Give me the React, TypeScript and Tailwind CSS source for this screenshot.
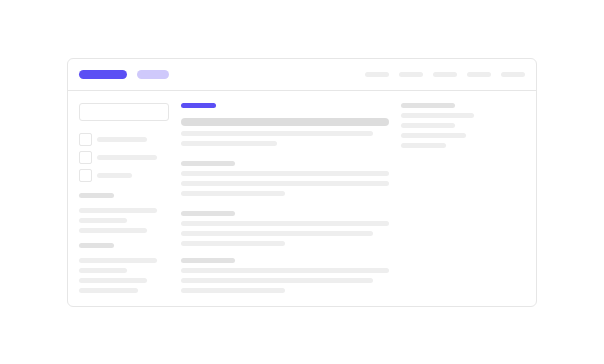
import React from "react";

const Bar = ({ w, h = "h-[5px]", c = "bg-[#eeeeee]", cls = "" }: { w: string; h?: string; c?: string; cls?: string }) => (
  <div className={`${w} ${h} ${c} rounded-full ${cls}`} />
);

export default function App() {
  return (
    <div className="w-[604px] h-[364px] bg-white pt-[58px] pl-[67px]">
      <div className="w-[470px] h-[249px] border border-[#e6e6e6] rounded-[6px] bg-white flex flex-col">
        <div className="h-[32px] border-b border-[#e6e6e6] flex items-center justify-between px-[11px]">
          <div className="flex gap-[10px]">
            <div className="w-[48px] h-[9px] rounded-full bg-[#5b4ff4]" />
            <div className="w-[32px] h-[9px] rounded-full bg-[#cfc9fb]" />
          </div>
          <div className="flex gap-[10px]">
            {[0, 1, 2, 3, 4].map((i) => (
              <div key={i} className="w-[24px] h-[5px] rounded-full bg-[#eeeeee]" />
            ))}
          </div>
        </div>
        <div className="flex gap-[12px] px-[11px] pt-[12px]">
          {/* sidebar */}
          <div className="w-[90px] flex flex-col">
            <div className="w-[90px] h-[18px] border border-[#e6e6e6] rounded-[3px]" />
            <div className="mt-[12px] flex flex-col gap-[5px]">
              {["w-[50px]", "w-[60px]", "w-[35px]"].map((w, i) => (
                <div key={i} className="flex items-center gap-[5px] h-[13px]">
                  <div className="w-[13px] h-[13px] border border-[#e6e6e6] rounded-[2px]" />
                  <Bar w={w} />
                </div>
              ))}
            </div>
            <Bar w="w-[35px]" c="bg-[#e2e2e2]" cls="mt-[11px]" />
            <div className="mt-[10px] flex flex-col gap-[5px]">
              <Bar w="w-[78px]" />
              <Bar w="w-[48px]" />
              <Bar w="w-[68px]" />
            </div>
            <Bar w="w-[35px]" c="bg-[#e2e2e2]" cls="mt-[10px]" />
            <div className="mt-[10px] flex flex-col gap-[5px]">
              <Bar w="w-[78px]" />
              <Bar w="w-[48px]" />
              <Bar w="w-[68px]" />
              <Bar w="w-[59px]" />
            </div>
          </div>
          {/* main */}
          <div className="w-[208px] flex flex-col">
            <Bar w="w-[35px]" c="bg-[#5b4ff4]" />
            <Bar w="w-[208px]" h="h-[8px]" c="bg-[#dddddd]" cls="mt-[10px]" />
            <div className="mt-[5px] flex flex-col gap-[5px]">
              <Bar w="w-[192px]" />
              <Bar w="w-[96px]" />
            </div>
            <Bar w="w-[54px]" c="bg-[#e2e2e2]" cls="mt-[15px]" />
            <div className="mt-[5px] flex flex-col gap-[5px]">
              <Bar w="w-[208px]" />
              <Bar w="w-[208px]" />
              <Bar w="w-[104px]" />
            </div>
            <Bar w="w-[54px]" c="bg-[#e2e2e2]" cls="mt-[15px]" />
            <div className="mt-[5px] flex flex-col gap-[5px]">
              <Bar w="w-[208px]" />
              <Bar w="w-[192px]" />
              <Bar w="w-[104px]" />
            </div>
            <Bar w="w-[54px]" c="bg-[#e2e2e2]" cls="mt-[12px]" />
            <div className="mt-[5px] flex flex-col gap-[5px]">
              <Bar w="w-[208px]" />
              <Bar w="w-[192px]" />
              <Bar w="w-[104px]" />
            </div>
          </div>
          {/* right */}
          <div className="w-[124px] flex flex-col">
            <Bar w="w-[54px]" c="bg-[#e2e2e2]" />
            <div className="mt-[5px] flex flex-col gap-[5px]">
              <Bar w="w-[73px]" />
              <Bar w="w-[54px]" />
              <Bar w="w-[65px]" />
              <Bar w="w-[45px]" />
            </div>
          </div>
        </div>
      </div>
    </div>
  );
}
